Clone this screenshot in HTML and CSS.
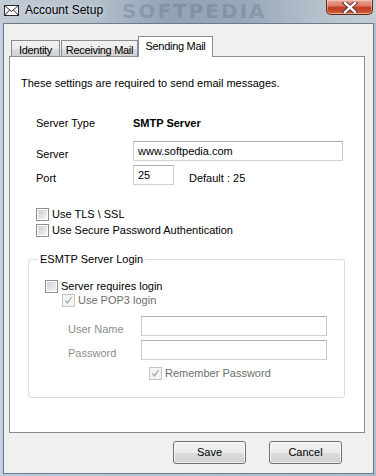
FILE: index.html
```html
<!DOCTYPE html>
<html>
<head>
<meta charset="utf-8">
<link rel="stylesheet" href="styles.css">
</head>
<body>
<div class="window">
  <div class="titlebar">
    <svg class="mail-icon" width="15" height="11" viewBox="0 0 15 11">
      <rect x="0.5" y="0.5" width="14" height="10" fill="#fff" stroke="#2b2b2b"/>
      <path d="M0.5 0.5 L7.5 6.5 L14.5 0.5 M0.5 10.5 L5.5 5 M14.5 10.5 L9.5 5" fill="none" stroke="#2b2b2b"/>
    </svg>
    <span class="title">Account Setup</span>
    <span class="wm-title">SOFTPEDIA</span>
    <div class="close">
      <svg width="16" height="11" viewBox="0 0 16 11">
        <path d="M3 1 L13 10 M13 1 L3 10" stroke="#4a2a26" stroke-width="4.2" stroke-linecap="square"/>
        <path d="M3 1 L13 10 M13 1 L3 10" stroke="#fff" stroke-width="2.4" stroke-linecap="square"/>
      </svg>
    </div>
  </div>
  <div class="client">
    <div class="tabs">
      <div class="tab t-identity">Identity</div>
      <div class="tab t-receiving">Receiving Mail</div>
      <div class="tab t-sending active">Sending Mail</div>
    </div>
    <div class="panel">
      <p class="intro">These settings are required to send email messages.</p>
      <div class="row row-type"><span class="label">Server Type</span><span class="value">SMTP Server</span></div>
      <div class="row row-server"><span class="label">Server</span><div class="input input-server">www.softpedia.com</div></div>
      <div class="row row-port"><span class="label">Port</span><div class="input input-port">25</div><span class="default">Default : 25</span></div>
      <div class="check check-tls"><span class="box"></span><span>Use TLS \ SSL</span></div>
      <div class="check check-spa"><span class="box"></span><span>Use Secure Password Authentication</span></div>
      <fieldset class="group">
        <legend>ESMTP Server Login</legend>
        <div class="check check-req"><span class="box"></span><span>Server requires login</span></div>
        <div class="check check-pop disabled"><span class="box checked"><svg width="9" height="9" viewBox="0 0 9 9"><path d="M1.5 4.5 L3.5 7 L7.5 1" fill="none" stroke="#a8a8a8" stroke-width="1.3"/></svg></span><span>Use POP3 login</span></div>
        <div class="row row-user"><span class="label dim">User Name</span><div class="input input-cred"></div></div>
        <div class="row row-pass"><span class="label dim">Password</span><div class="input input-cred"></div></div>
        <div class="check check-rem disabled"><span class="box checked"><svg width="9" height="9" viewBox="0 0 9 9"><path d="M1.5 4.5 L3.5 7 L7.5 1" fill="none" stroke="#a8a8a8" stroke-width="1.3"/></svg></span><span>Remember Password</span></div>
      </fieldset>
    </div>
    <div class="buttons">
      <div class="btn">Save</div>
      <div class="btn">Cancel</div>
    </div>
  </div>
</div>
</body>
</html>
```
FILE: styles.css
```css
html, body {
  margin: 0;
  padding: 0;
}
body {
  width: 376px;
  height: 476px;
  overflow: hidden;
  font-family: "Liberation Sans", Arial, sans-serif;
  font-size: 11px;
  color: #000;
}
.window {
  width: 376px;
  height: 476px;
  box-sizing: border-box;
  display: flex;
  flex-direction: column;
  background: linear-gradient(90deg, #c6d6e6 0px, #bccbdb 3px, #aebccb 100%);
}
.titlebar {
  position: relative;
  height: 23px;
  display: flex;
  align-items: flex-start;
  background: linear-gradient(90deg, #c3ccd6 0%, #b3bfcb 25%, #93a4b6 45%, #98a8b9 65%, #b6c1cc 85%, #c4cdd6 100%);
  overflow: hidden;
}
.mail-icon {
  margin: 5px 0 0 4px;
  flex: none;
}
.title {
  margin: 3px 0 0 6px;
  font-family: "Liberation Sans", Arial, sans-serif;
  font-size: 12px;
  line-height: 15px;
  color: #000;
  text-shadow: 0 0 6px rgba(255,255,255,0.9);
  position: relative;
  z-index: 1;
}
.wm-title {
  position: absolute;
  left: 122px;
  top: 0;
  font-family: "DejaVu Sans", sans-serif;
  font-weight: bold;
  font-size: 20px;
  line-height: 23px;
  letter-spacing: 2px;
  color: rgba(60, 80, 105, 0.22);
  filter: blur(0.6px);
}
.close {
  margin-left: auto;
  margin-right: 3px;
  width: 47px;
  height: 15px;
  box-sizing: border-box;
  border: 1px solid #5e2a22;
  border-top: none;
  border-radius: 0 0 5px 5px;
  background: linear-gradient(180deg, #eba596 0%, #dc7c66 40%, #c23c26 55%, #c8502f 85%, #de8559 100%);
  box-shadow: inset 0 0 0 1px rgba(255,255,255,0.35);
  display: flex;
  align-items: center;
  justify-content: center;
  position: relative;
  z-index: 1;
}
.client {
  margin-left: 3px;
  width: 371px;
  height: 451px;
  box-sizing: border-box;
  border: 1px solid #6b7a8c;
  background: #f0f0f0;
  display: flex;
  flex-direction: column;
}
.tabs {
  display: flex;
  align-items: flex-end;
  height: 20px;
  margin: 13px 0 -1px 7px;
  font-size: 11px;
  white-space: nowrap;
}
.tab {
  box-sizing: border-box;
  height: 17px;
  border: 1px solid #898c95;
  border-bottom: none;
  background: linear-gradient(180deg, #f2f2f2 0%, #ebebeb 50%, #dddddd 51%, #cfcfcf 100%);
  text-align: center;
  line-height: 16px;
  padding-top: 1px;
  letter-spacing: -0.3px;
}
.t-identity { width: 49px; }
.t-receiving { width: 77px; margin-left: 1px; }
.t-sending { width: 75px; }
.tab.active {
  height: 21px;
  background: #fff;
  position: relative;
  z-index: 1;
  padding-top: 0;
  line-height: 18px;
}
.panel {
  margin-left: 5px;
  width: 356px;
  height: 377px;
  box-sizing: border-box;
  border: 1px solid #898c95;
  background: #fff;
  padding: 20px 0 0 11px;
}
.intro {
  margin: 0;
  line-height: 13px;
}
.row {
  display: flex;
  align-items: flex-start;
}
.label {
  width: 97px;
  flex: none;
  line-height: 13px;
}
.row-type {
  margin: 27px 0 0 15px;
}
.value {
  font-weight: bold;
  line-height: 13px;
}
.row-server {
  margin: 11px 0 0 15px;
  height: 20px;
}
.row-server .label,
.row-port .label {
  padding-top: 7px;
}
.row-port {
  margin: 4px 0 0 15px;
  height: 20px;
}
.input {
  box-sizing: border-box;
  height: 20px;
  border: 1px solid #abadb3;
  border-color: #abadb3 #c8cad0 #cfd3d8 #c8cad0;
  background: #fff;
  padding: 3px 0 0 4px;
  line-height: 13px;
}
.input-server { width: 210px; }
.input-port { width: 41px; }
.default {
  margin-left: 15px;
  padding-top: 7px;
  line-height: 13px;
}
.check {
  display: flex;
  align-items: center;
  height: 13px;
  line-height: 13px;
}
.check .box {
  flex: none;
  width: 13px;
  height: 13px;
  box-sizing: border-box;
  border: 1px solid #8e8f8f;
  padding: 1px;
  background: linear-gradient(135deg, #cdd0d4, #f4f4f4) content-box, #fff;
  margin-right: 3px;
  display: flex;
  align-items: center;
  justify-content: center;
}
.check .box.checked {
  border-color: #c4c4c4;
  background: #f4f4f4;
  padding: 0;
}
.check.disabled {
  color: #6d6d6d;
}
.check-tls {
  margin: 23px 0 0 15px;
}
.check-spa {
  margin: 3px 0 0 15px;
}
.group {
  margin: 16px 0 0 7px;
  width: 317px;
  box-sizing: border-box;
  border: 1px solid #d5dfe5;
  border-radius: 3px;
  padding: 14px 0 17px 9px;
  min-width: 0;
}
.group legend {
  padding: 0 2px;
  line-height: 13px;
}
.check-req {
  margin-left: 7px;
}
.check-pop {
  margin: 1px 0 0 24px;
}
.row-user {
  margin: 9px 0 0 30px;
  height: 20px;
}
.row-pass {
  margin: 4px 0 0 30px;
  height: 20px;
}
.dim {
  color: #8d8d8d;
  width: 73px;
  padding-top: 7px;
}
.input-cred {
  width: 186px;
}
.check-rem {
  margin: 7px 0 0 111px;
}
.buttons {
  display: flex;
  justify-content: flex-end;
  gap: 23px;
  margin-top: 8px;
  padding-right: 31px;
}
.btn {
  width: 73px;
  height: 23px;
  box-sizing: border-box;
  border: 1px solid #707070;
  border-radius: 3px;
  background: linear-gradient(180deg, #f2f2f2 0%, #ebebeb 50%, #dddddd 51%, #cfcfcf 100%);
  box-shadow: inset 0 0 0 1px rgba(255,255,255,0.7);
  text-align: center;
  line-height: 21px;
  font-size: 11px;
}
```
